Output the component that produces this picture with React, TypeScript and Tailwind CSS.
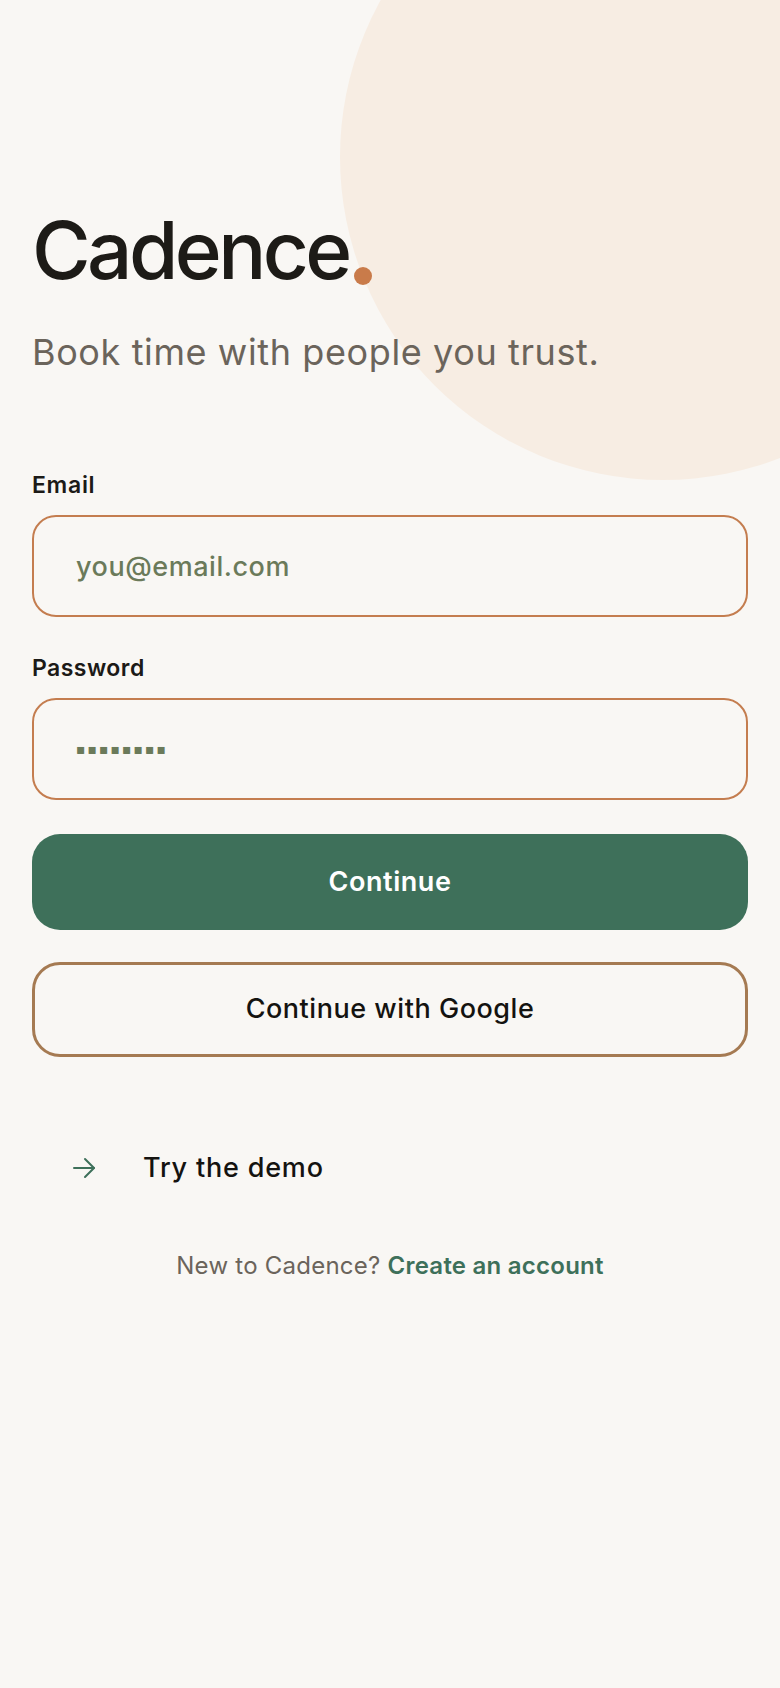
import { useState } from "react"

export default function App() {
  const [email, setEmail] = useState("")

  return (
    <div className="relative min-h-screen overflow-hidden bg-[#f9f7f4] font-['Inter',sans-serif]">
      {/* decorative blob */}
      <div className="absolute left-[340px] top-[-166px] h-[646px] w-[646px] rounded-full bg-[#f7ede3]" />

      <div className="relative px-8 pt-[210px]">
        <h1 className="flex items-end text-[80px] font-medium leading-none tracking-[-0.045em] text-[#1d1b17]">
          Cadence
          <span className="mb-[5px] ml-[5px] h-[18px] w-[18px] rounded-full bg-[#c97b4a]" />
        </h1>
        <p className="mt-[41px] text-[36px] leading-[1.2] tracking-[0.017em] text-[#6b645b]">Book time with people you trust.</p>

        <form className="mt-[97px]" onSubmit={(e) => e.preventDefault()}>
          <label className="block text-[23px] font-semibold leading-[28px] tracking-[0.03em] text-[#1c1a17]">Email</label>
          <input
            type="email"
            placeholder="you@email.com"
            value={email}
            onChange={(e) => setEmail(e.target.value)}
            className="mt-4 h-[102px] w-full rounded-[24px] border-2 border-[#c47d4f] bg-transparent px-[42px] text-[27px] font-medium tracking-[0.02em] text-[#6b7a5a] placeholder:text-[#6b7a5a] focus:outline-none"
          />

          <label className="mt-[37px] block text-[23px] font-semibold leading-[28px] tracking-[0.02em] text-[#1c1a17]">Password</label>
          <div className="mt-4 flex h-[102px] w-full items-center rounded-[24px] border-2 border-[#c47d4f] px-[42px]">
            <span className="font-['DejaVu_Sans',sans-serif] text-[14px] tracking-[2px] text-[#6b7a5a]">▪▪▪▪▪▪▪▪</span>
          </div>

          <button className="mt-[34px] h-[96px] w-full rounded-[28px] bg-[#3e705a] text-[27px] font-semibold tracking-[0.02em] text-white">
            Continue
          </button>
          <button
            type="button"
            className="mt-8 h-[95px] w-full rounded-[28px] border-[3px] border-[#a57a52] text-[27px] font-medium tracking-[0.02em] text-[#141310]"
          >
            Continue with Google
          </button>
        </form>

        <div className="mt-[91px] flex h-10 items-center pl-[41px]">
          <svg width="23" height="22" viewBox="0 0 23 22" fill="none" stroke="#3e705a" strokeWidth="2" strokeLinecap="round" strokeLinejoin="round">
            <path d="M1 11h20" />
            <path d="M12 2l9 9-9 9" />
          </svg>
          <span className="ml-[47px] text-[27px] font-medium tracking-[0.03em] text-[#141310]">Try the demo</span>
        </div>

        <p className="mt-16 text-center text-[24px] leading-[28px] tracking-[0.01em] text-[#6b645b]">
          New to Cadence? <a className="font-semibold text-[#3e705a]">Create an account</a>
        </p>
      </div>
    </div>
  )
}
